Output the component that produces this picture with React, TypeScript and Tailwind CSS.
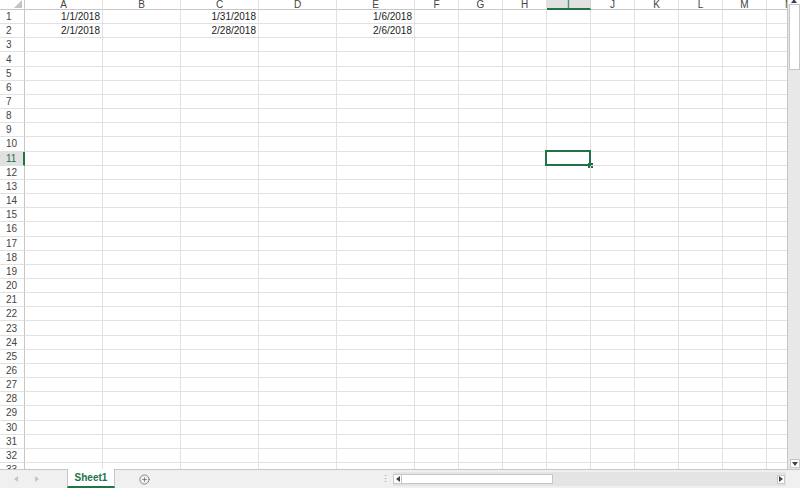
import { CirclePlus } from 'lucide-react';

const cols = ['A', 'B', 'C', 'D', 'E', 'F', 'G', 'H', 'I', 'J', 'K', 'L', 'M', 'N'];

const data: Record<string, string> = {
  A1: '1/1/2018',
  C1: '1/31/2018',
  E1: '1/6/2018',
  A2: '2/1/2018',
  C2: '2/28/2018',
  E2: '2/6/2018',
};

const rows = Array.from({ length: 33 }, (_, i) => i + 1);

function Tri({ dir, className }: { dir: 'up' | 'down' | 'left' | 'right'; className?: string }) {
  const pts = {
    up: '0,4 3,0 6,4',
    down: '0,0 6,0 3,4',
    left: '4,0 4,6 0,3',
    right: '0,0 0,6 4,3',
  }[dir];
  const vb = dir === 'up' || dir === 'down' ? '0 0 6 4' : '0 0 4 6';
  const w = dir === 'up' || dir === 'down' ? 6 : 4;
  const h = dir === 'up' || dir === 'down' ? 4 : 6;
  return (
    <svg width={w} height={h} viewBox={vb} className={className}>
      <polygon points={pts} fill="currentColor" />
    </svg>
  );
}

function Grid() {
  return (
    <div className="flex-1 min-w-0 overflow-hidden">
      <div className="grid w-[855px] grid-cols-[25px_repeat(5,78px)_repeat(9,44px)] grid-rows-[10px_repeat(33,14.16px)] text-[10px] leading-none">
        {/* corner */}
        <div className="relative border-r border-b border-[#c8c8c8] bg-white">
          <svg width="8" height="8" viewBox="0 0 8 8" className="absolute right-[2px] bottom-[1px]">
            <polygon points="8,0 8,8 0,8" fill="#c4c4c4" />
          </svg>
        </div>
        {cols.map((c) =>
          c === 'I' ? (
            <div
              key={c}
              className="flex items-center justify-center pt-[1px] border-r border-[#d4d4d4] border-b-2 border-b-[#217346] bg-[#e1e1e1] text-[#217346]"
            >
              {c}
            </div>
          ) : (
            <div
              key={c}
              className="flex items-center justify-center pt-[1px] border-r border-b border-r-[#e1e1e1] border-b-[#c8c8c8] bg-white text-[#444]"
            >
              {c}
            </div>
          ),
        )}
        {rows.map((r) => (
          <Row key={r} r={r} />
        ))}
      </div>
    </div>
  );
}

function Row({ r }: { r: number }) {
  const sel = r === 11;
  return (
    <>
      {sel ? (
        <div className="flex items-center pt-[1px] pl-[6px] border-b border-b-[#e1e1e1] border-r-2 border-r-[#217346] bg-[#e1e1e1] text-[#217346]">
          {r}
        </div>
      ) : (
        <div className="flex items-center pt-[1px] pl-[6px] border-b border-r border-b-[#e1e1e1] border-r-[#c8c8c8] bg-white text-[#444]">
          {r}
        </div>
      )}
      {cols.map((c) => {
        const key = c + r;
        const val = data[key];
        return (
          <div
            key={key}
            className="relative flex items-center justify-end pt-[1px] pr-[2px] border-r border-b border-[#e1e1e1] text-[#222]"
          >
            {val}
            {sel && c === 'I' && (
              <div className="absolute left-[-2px] top-[-2px] right-[-1px] bottom-[-1px] border-2 border-[#217346]">
                <div className="absolute right-[-4px] bottom-[-4px] w-[5px] h-[5px] bg-[#217346]" />
              </div>
            )}
          </div>
        );
      })}
    </>
  );
}

function VScroll() {
  return (
    <div className="w-[13px] flex flex-col bg-[#e8e8e8] border-l border-[#c6c6c6]">
      <div className="h-[4px] bg-white flex items-start justify-center text-[#444] overflow-hidden">
        <Tri dir="up" className="-mt-[1px]" />
      </div>
      <div className="h-[66px] bg-white border border-[#c6c6c6] ml-[1px]" />
      <div className="flex-1" />
      <div className="h-[9px] mb-[1px] ml-[2px] bg-white border border-[#c6c6c6] flex items-center justify-center text-[#444]">
        <Tri dir="down" />
      </div>
    </div>
  );
}

function BottomBar() {
  return (
    <div className="h-[19px] flex bg-[#f0f0f0] border-t border-[#c6c6c6]">
      <div className="w-[67px] flex items-center pl-[14px] gap-[17px] text-[#c4c4c4]">
        <Tri dir="left" />
        <Tri dir="right" />
      </div>
      <div className="w-[48px] -mt-[1px] flex items-center justify-center bg-white border-x border-[#c6c6c6] border-b-2 border-b-[#217346] text-[10px] font-bold text-[#217346]">
        Sheet1
      </div>
      <div className="flex-1 flex items-center">
        <CirclePlus size={11} strokeWidth={1.6} className="ml-[24px] text-[#666]" />
      </div>
      <div className="w-[15px] flex items-center justify-start pl-[3px] text-[#999] text-[9px] leading-none">⋮</div>
      <div className="w-[393px] flex items-center h-[14px] mt-[2px] bg-[#e4e4e4]">
        <div className="w-[9px] h-[10px] bg-white border border-[#c6c6c6] flex items-center justify-center text-[#444]">
          <Tri dir="left" />
        </div>
        <div className="w-[151px] h-[10px] bg-white border border-[#c6c6c6] border-l-0" />
        <div className="flex-1" />
        <div className="w-[8px] h-[9px] mr-[1px] bg-white border border-[#c6c6c6] flex items-center justify-center text-[#444]">
          <Tri dir="right" />
        </div>
      </div>
      <div className="w-[14px]" />
    </div>
  );
}

export default function App() {
  return (
    <div className="w-[800px] h-[488px] flex flex-col overflow-hidden bg-white font-['Liberation_Sans',Arial,sans-serif]">
      <div className="h-[469px] flex">
        <Grid />
        <VScroll />
      </div>
      <BottomBar />
    </div>
  );
}
